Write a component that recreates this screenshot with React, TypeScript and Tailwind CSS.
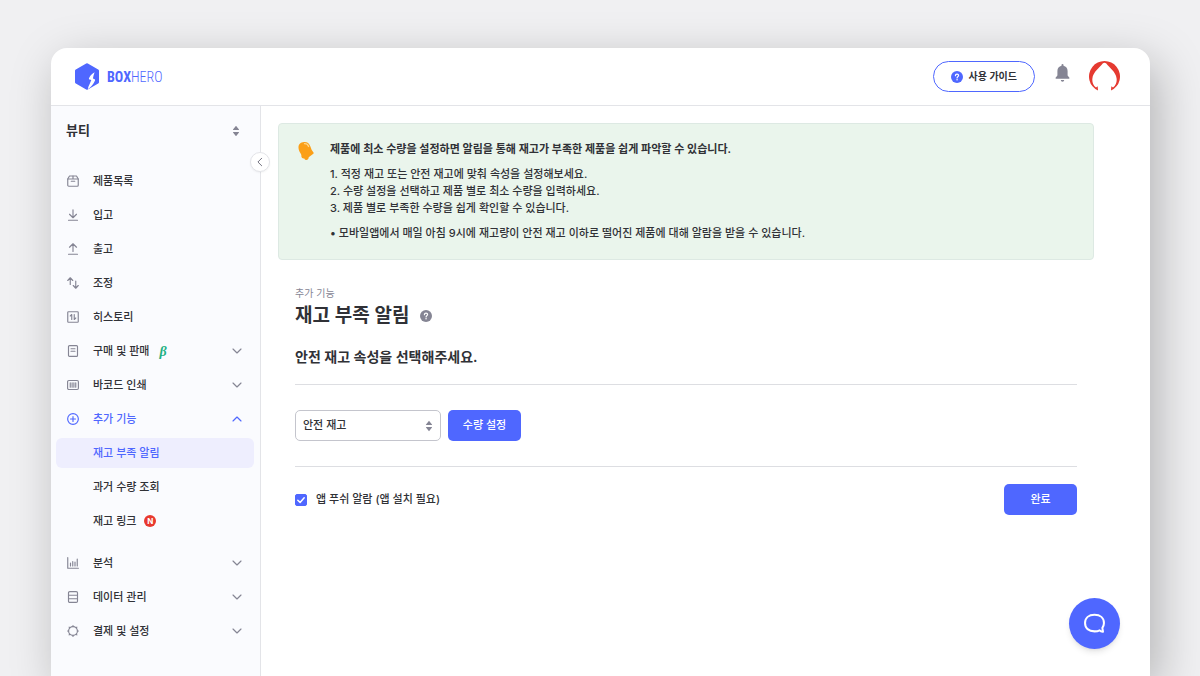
import { useState, type ReactNode } from 'react';

function Line({ children, className = 'size-3' }: { children: ReactNode; className?: string }) {
  return (
    <svg
      viewBox="0 0 24 24"
      fill="none"
      stroke="currentColor"
      strokeWidth="2.300"
      strokeLinecap="round"
      strokeLinejoin="round"
      aria-hidden="true"
      className={`shrink-0 ${className}`}
    >
      {children}
    </svg>
  );
}

const icons = {
  product: (
    <>
      <path d="M5 2h14l3.500 6v12.500a2 2 0 0 1-2 2h-17a2 2 0 0 1-2-2V8z" />
      <path d="M1.500 8h21M12 2v6M8.500 12.500h7" />
    </>
  ),
  inbound: <path d="M12 1.500V17M5 10.500l7 7 7-7M3 22.500h18" />,
  outbound: <path d="M12 17V1.500M5 8.500l7-7 7 7M3 22.500h18" />,
  adjust: <path d="M6.500 15V2M1.500 7l5-5.500L11.500 7M17.500 8v14M12.500 17l5 5.500 5-5.500" />,
  history: (
    <>
      <rect x="1.500" y="1.500" width="21" height="21" rx="1.500" />
      <path d="M9.500 17V7L6.500 10M14.500 7v10l3-3" />
    </>
  ),
  trade: (
    <>
      <rect x="3" y="1.200" width="18" height="21.600" rx="2" />
      <path d="M8 7.500h8M8 12.500h8" />
    </>
  ),
  barcode: (
    <>
      <rect x="1.200" y="3" width="21.600" height="18" rx="2.500" />
      <path d="M6.500 7.500v9M10.200 7.500v9M13.800 7.500v9M17.500 7.500v9" />
    </>
  ),
  extra: (
    <>
      <circle cx="12" cy="12" r="10.700" />
      <path d="M12 7v10M7 12h10" />
    </>
  ),
  analysis: <path d="M1.500 1.200v21.300h21.300M7 18v-6M11.500 18V9M16 18v-8M20.500 18V4" />,
  data: (
    <>
      <rect x="3" y="1.200" width="18" height="21.600" rx="2.500" />
      <path d="M3 8.500h18M3 15.500h18" />
    </>
  ),
  settings: (
    <>
      <circle cx="12" cy="12" r="8.800" />
      <path d="M12 3V1.200M12 22.800V21M3 12H1.200M22.800 12H21M5.600 5.600 4.200 4.200M19.800 19.800l-1.400-1.400M5.600 18.400l-1.400 1.400M19.800 4.200l-1.400 1.400" />
    </>
  ),
};

function UpDown() {
  return (
    <svg viewBox="0 0 8 12" className="h-3 w-2 shrink-0 fill-[#858594]" aria-hidden="true">
      <path d="M4 .8 7 4.400a.4.4 0 0 1-.3.600H1.300a.4.4 0 0 1-.3-.600zM4 11.200l3-3.600a.4.4 0 0 0-.3-.600H1.300a.4.4 0 0 0-.3.600z" />
    </svg>
  );
}

function Question({ className }: { className: string }) {
  return (
    <svg viewBox="0 0 12 12" className={`size-3 shrink-0 ${className}`} aria-hidden="true">
      <circle cx="6" cy="6" r="6" fill="currentColor" />
      <path
        d="M4.400 4.700c0-1 .7-1.600 1.600-1.600s1.600.6 1.600 1.400c0 1.100-1.500 1.200-1.500 2.400"
        fill="none"
        stroke="#fff"
        strokeWidth="1.200"
        strokeLinecap="round"
      />
      <circle cx="6.050" cy="8.700" r=".75" fill="#fff" />
    </svg>
  );
}

type Item = { icon: keyof typeof icons; label: string; beta?: boolean; group?: boolean; open?: boolean };

const items: Item[] = [
  { icon: 'product', label: '제품목록' },
  { icon: 'inbound', label: '입고' },
  { icon: 'outbound', label: '출고' },
  { icon: 'adjust', label: '조정' },
  { icon: 'history', label: '히스토리' },
  { icon: 'trade', label: '구매 및 판매', beta: true, group: true },
  { icon: 'barcode', label: '바코드 인쇄', group: true },
  { icon: 'extra', label: '추가 기능', group: true, open: true },
  { icon: 'analysis', label: '분석', group: true },
  { icon: 'data', label: '데이터 관리', group: true },
  { icon: 'settings', label: '결제 및 설정', group: true },
];

const children = [
  { label: '재고 부족 알림', active: true },
  { label: '과거 수량 조회' },
  { label: '재고 링크', fresh: true },
];

function NavItem({ item }: { item: Item }) {
  const body = (
    <>
      <span className={item.open ? 'text-[#4f67ff]' : 'text-[#858594]'}>
        <Line>{icons[item.icon]}</Line>
      </span>
      <span>{item.label}</span>
      {item.beta && (
        <span className="-ml-1 font-['Liberation_Serif',serif] text-[14px] font-bold text-[#1fb183] italic">β</span>
      )}
      {item.group && (
        <Line className={item.open ? 'ml-auto size-3 text-[#4f67ff]' : 'ml-auto size-3 text-[#858594]'}>
          <path d={item.open ? 'm4 16 8-8 8 8' : 'm4 8 8 8 8-8'} />
        </Line>
      )}
    </>
  );
  const style = `flex h-[34px] w-full items-center gap-[14px] pr-[17px] pl-4 ${item.open ? 'text-[#4f67ff]' : ''}`;
  return item.group ? (
    <button type="button" aria-expanded={!!item.open} className={style}>
      {body}
    </button>
  ) : (
    <a href="#" className={style}>
      {body}
    </a>
  );
}

function Sidebar() {
  return (
    <aside className="relative w-[210px] shrink-0 border-r border-[#e3e4e8] bg-[#fafbfe]">
      <button
        type="button"
        className="flex h-[50px] w-full items-center justify-between pr-5 pl-[15px] text-[13px] font-semibold"
      >
        뷰티
        <UpDown />
      </button>
      <button
        type="button"
        aria-label="메뉴 접기"
        className="absolute top-[46px] -right-[10px] flex size-5 items-center justify-center rounded-full border border-[#e3e4e8] bg-white text-[#6d6d7a] shadow-xs"
      >
        <Line className="size-[10px]">
          <path d="m16 3-9 9 9 9" />
        </Line>
      </button>
      <nav className="mt-2">
        <ul>
          {items.map((item) => (
            <li key={item.label}>
              <NavItem item={item} />
              {item.open && (
                <ul className="mb-2 pr-[6px] pl-[5px]">
                  {children.map((c) => (
                    <li key={c.label} className="py-[2px]">
                      <a
                        href="#"
                        className={`flex h-[30px] items-center gap-2 rounded-md pl-[37px] ${
                          c.active ? 'bg-[#eeeefe] text-[#4f67ff]' : ''
                        }`}
                      >
                        {c.label}
                        {c.fresh && (
                          <span className="flex size-3 items-center justify-center rounded-full bg-[#e8392f] text-[8px] font-bold text-white">
                            N
                          </span>
                        )}
                      </a>
                    </li>
                  ))}
                </ul>
              )}
            </li>
          ))}
        </ul>
      </nav>
    </aside>
  );
}

function Header() {
  return (
    <header className="flex h-[58px] items-center border-b border-[#e3e4e8] pr-[30px] pl-6">
      <a href="#" className="flex items-center gap-2 text-[#4f67ff]">
        <svg viewBox="0 0 24 27" className="h-[27px] w-6" aria-hidden="true">
          <path
            d="M11.200.4a1.600 1.600 0 0 1 1.600 0l10.400 6a1.600 1.600 0 0 1 .8 1.400v11.400a1.600 1.600 0 0 1-.8 1.400l-10.400 6a1.600 1.600 0 0 1-1.600 0l-10.400-6A1.600 1.600 0 0 1 0 19.200V7.800a1.600 1.600 0 0 1 .8-1.400z"
            fill="currentColor"
          />
          <path
            d="M19.600 9.300c-2 1-4.200 3-5.500 5.600-.4.900-.2 1.500.7 1.700l1.500.5c-.9 2.500-1.900 4.600-2.900 6.600l-.6 2.600c3.200-2.200 5.600-5.200 7.100-8.600.4-.8.1-1.400-.7-1.700l-1.300-.4c.4-2.200 1-4.300 1.700-6.300z"
            fill="#fff"
          />
        </svg>
        <span className="font-['Roboto_Condensed','Open_Sans_Condensed','Roboto',sans-serif] text-[14px] leading-4 font-light">
          <span className="font-bold">BOX</span>HERO
        </span>
      </a>
      <div className="ml-auto flex items-center">
        <button
          type="button"
          className="flex h-[31px] items-center gap-[5px] rounded-full border border-[#4f67ff] px-[17px] text-[10px] font-semibold"
        >
          <Question className="text-[#4f67ff]" />
          사용 가이드
        </button>
        <button type="button" aria-label="알림" className="mb-2 ml-5">
          <svg viewBox="0 0 15 18" className="h-[18px] w-[15px] fill-[#858594]" aria-hidden="true">
            <path d="M7.500 0a1 1 0 0 1 1 1v.8c2.500.5 4.100 2.500 4.100 5.100v4.500l1.800 2.300a.6.6 0 0 1-.5 1H1.100a.6.6 0 0 1-.5-1l1.800-2.300V6.900c0-2.600 1.600-4.600 4.100-5.100V1a1 1 0 0 1 1-1zM5.800 16h3.400a1.700 1.700 0 0 1-3.400 0z" />
          </svg>
        </button>
        <button type="button" aria-label="내 계정" className="ml-[19px]">
          <svg viewBox="0 0 31 31" className="size-[31px]" aria-hidden="true">
            <path
              d="M9 29.600A15.500 15.500 0 1 1 22 29.600L22.300 25.200 24 26.600C27 24 28 21 27.600 17.500 27 11 20 6.500 17.300 2.600Q15.500 1 13.700 2.600C11 6.500 4 11 3.400 17.500 3 21 4 24 7 26.600L8.700 25.200z"
              fill="#e53a31"
            />
          </svg>
        </button>
      </div>
    </header>
  );
}

function Notice() {
  return (
    <section className="flex gap-[15px] rounded-sm border border-[#dde9e3] bg-[#eaf5ec] px-[18px] py-[17px] leading-[17px]">
      <svg viewBox="0 0 18 20" className="h-5 w-[18px] shrink-0" aria-hidden="true">
        <path
          d="M1.500 7C1.200 3.500 3.500 1.200 7 1c3.200-.2 5.200 1.300 6.300 4.200l1.300 3.600c.4 1 1.200 1.700 1.900 2.700.4.600.1 1.200-.5 1.600l-4.300 3.200c-.1 2-1.400 3-2.900 2.600-.8-.2-1.200-.7-1.500-1.400-1-.1-2-.400-2.500-1-.5-.7-.3-1.500-.5-2.600-.2-1-1-1.800-1.600-3C2 9.600 1.600 8.400 1.500 7z"
          fill="#fb9f17"
        />
        <path d="M7.500 2.600c2-.1 3.400 1 4.100 2.900" fill="none" stroke="#ffd68a" strokeWidth="1.300" strokeLinecap="round" />
      </svg>
      <div className="flex flex-col gap-2">
        <p className="font-semibold">제품에 최소 수량을 설정하면 알림을 통해 재고가 부족한 제품을 쉽게 파악할 수 있습니다.</p>
        <div>
          <p>1. 적정 재고 또는 안전 재고에 맞춰 속성을 설정해보세요.</p>
          <p>2. 수량 설정을 선택하고 제품 별로 최소 수량을 입력하세요.</p>
          <p>3. 제품 별로 부족한 수량을 쉽게 확인할 수 있습니다.</p>
        </div>
        <p>• 모바일앱에서 매일 아침 9시에 재고량이 안전 재고 이하로 떨어진 제품에 대해 알람을 받을 수 있습니다.</p>
      </div>
    </section>
  );
}

export default function App() {
  const [push, setPush] = useState(true);
  return (
    <div className="flex min-h-screen flex-col overflow-hidden bg-[#f0f0f2] pt-12 pr-[50px] pl-[51px] font-['Inter','Noto_Sans_CJK_KR',sans-serif] text-[11px] font-medium text-[#303136]">
      <div className="flex flex-1 flex-col overflow-hidden rounded-t-2xl bg-white shadow-[8px_14px_48px_rgba(0,0,0,0.26)]">
        <Header />
        <div className="flex flex-1">
          <Sidebar />
          <main className="min-w-0 flex-1 pt-[17px] pr-14 pl-[17px]">
            <Notice />
            <div className="px-[17px] pt-[26px]">
              <p className="text-[10px] leading-[14px] font-normal text-[#858594]">추가 기능</p>
              <div className="mt-[2px] flex items-center gap-[11px]">
                <h1 className="text-[19px] leading-7 font-semibold">재고 부족 알림</h1>
                <Question className="text-[#858594]" />
              </div>
              <h2 className="mt-[17px] border-b border-[#dddee2] pb-[17px] text-[14px] leading-5 font-semibold">
                안전 재고 속성을 선택해주세요.
              </h2>
              <div className="flex gap-[7px] border-b border-[#dddee2] py-[25px]">
                <div className="relative w-[146px]">
                  <select
                    aria-label="안전 재고 속성"
                    className="h-[31px] w-full appearance-none rounded-[5px] border border-[#c4c5cd] bg-white pr-6 pl-[7px]"
                  >
                    <option>안전 재고</option>
                  </select>
                  <span className="pointer-events-none absolute inset-y-0 right-2 flex items-center">
                    <UpDown />
                  </span>
                </div>
                <button type="button" className="h-[31px] w-[73px] rounded-[5px] bg-[#4f67ff] text-white">
                  수량 설정
                </button>
              </div>
              <div className="flex items-center justify-between pt-[17px]">
                <label className="flex items-center gap-[9px]">
                  <span className="grid size-3 place-items-center">
                    <input
                      type="checkbox"
                      checked={push}
                      onChange={(e) => setPush(e.target.checked)}
                      className="col-start-1 row-start-1 size-3 appearance-none rounded-xs border border-[#4f67ff] checked:bg-[#4f67ff]"
                    />
                    <svg
                      viewBox="0 0 12 12"
                      className="pointer-events-none col-start-1 row-start-1 size-3"
                      aria-hidden="true"
                    >
                      <path
                        d="m2.800 6.200 2.300 2.200 4.100-4.600"
                        fill="none"
                        stroke="#fff"
                        strokeWidth="1.500"
                        strokeLinecap="round"
                        strokeLinejoin="round"
                      />
                    </svg>
                  </span>
                  앱 푸쉬 알람 (앱 설치 필요)
                </label>
                <button type="button" className="h-[31px] w-[73px] rounded-[5px] bg-[#4f67ff] text-white">
                  완료
                </button>
              </div>
            </div>
          </main>
        </div>
      </div>
      <button
        type="button"
        aria-label="채팅 상담"
        className="fixed right-20 bottom-[27px] flex size-[51px] items-center justify-center rounded-full bg-[#4f67ff] text-white shadow-md"
      >
        <Line className="size-[21px]">
          <path d="M21 17C22.200 15.400 22.800 13.600 22.800 11.500 22.800 5.500 18.500 2 12 2S1.200 5.500 1.200 11.500 5.500 21 12 21c2.200 0 4.200-.3 5.900-1.200 1 1.200 2.300 1.700 3.800 1.600z" />
        </Line>
      </button>
    </div>
  );
}
